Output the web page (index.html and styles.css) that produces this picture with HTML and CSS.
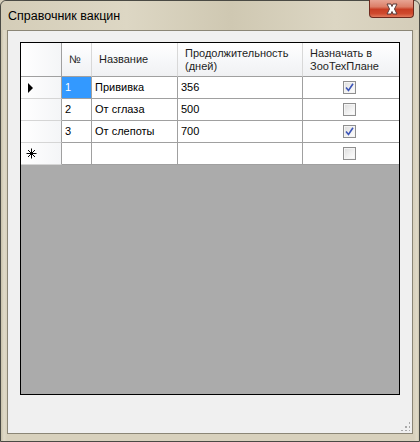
FILE: index.html
```html
<!DOCTYPE html>
<html>
<head>
<meta charset="utf-8">
<link rel="stylesheet" href="styles.css">
</head>
<body>
<div class="window">
  <div class="titlebar">
    <span class="title">Справочник вакцин</span>
    <div class="close">
      <svg width="20" height="12" viewBox="0 0 20 12"><path d="M5 1 L9 1 L10 3.5 L11 1 L15 1 L12.5 6 L15 11 L11 11 L10 8.5 L9 11 L5 11 L7.5 6 Z" fill="#fff" stroke="#5a3a38" stroke-width="1" stroke-linejoin="round"/></svg>
    </div>
  </div>
  <div class="client">
    <div class="grid">
      <div class="rows">
        <div class="c rh hdr"></div>
        <div class="c hdr">№</div>
        <div class="c hdr">Название</div>
        <div class="c hdr">Продолжительность<br>(дней)</div>
        <div class="c hdr">Назначать в<br>ЗооТехПлане</div>

        <div class="c rh"><span class="arrow"></span></div>
        <div class="c sel">1</div>
        <div class="c">Прививка</div>
        <div class="c">356</div>
        <div class="c chk"><span class="box on"><svg width="9" height="9" viewBox="0 0 9 9"><path d="M1 4.5 L3.5 7.5 L8 0.8" fill="none" stroke="#3c55b8" stroke-width="1.6"/></svg></span></div>

        <div class="c rh"></div>
        <div class="c">2</div>
        <div class="c">От сглаза</div>
        <div class="c">500</div>
        <div class="c chk"><span class="box"></span></div>

        <div class="c rh"></div>
        <div class="c">3</div>
        <div class="c">От слепоты</div>
        <div class="c">700</div>
        <div class="c chk"><span class="box on"><svg width="9" height="9" viewBox="0 0 9 9"><path d="M1 4.5 L3.5 7.5 L8 0.8" fill="none" stroke="#3c55b8" stroke-width="1.6"/></svg></span></div>

        <div class="c rh star"><svg width="11" height="11" viewBox="0 0 11 11"><path d="M5.5 0.5 V10.5 M0.5 5.5 H10.5 M2 2 L9 9 M9 2 L2 9" stroke="#000" stroke-width="1" fill="none"/></svg></div>
        <div class="c"></div>
        <div class="c"></div>
        <div class="c"></div>
        <div class="c chk"><span class="box"></span></div>
      </div>
    </div>
    <div class="grip"></div>
  </div>
</div>
</body>
</html>
```
FILE: styles.css
```css
html, body {
  margin: 0;
  padding: 0;
  background: #d6cfbb;
}
.window {
  width: 420px;
  height: 442px;
  box-sizing: border-box;
  display: flex;
  flex-direction: column;
  background: linear-gradient(90deg, #c9c2ab 0px, #e0dac8 3px, #d8d1bd 6px, #d8d1bd 413px, #e0dac8 416px, #c4bda6 419px);
  border: 1px solid #4a4a44;
  border-radius: 6px 6px 0 0;
}
.titlebar {
  height: 29px;
  display: flex;
  align-items: flex-start;
  background: linear-gradient(90deg, #d4cdb8, #ddd7c4 30%, #cfc8b2 55%, #dcd6c3 80%, #d4cdb9);
  border-radius: 6px 6px 0 0;
}
.title {
  font-family: "Liberation Sans", Arial, sans-serif;
  font-size: 12.5px;
  color: #000;
  margin: 8px 0 0 7px;
}
.close {
  margin-left: auto;
  margin-right: 5px;
  margin-top: -1px;
  width: 45px;
  height: 18px;
  box-sizing: border-box;
  border: 1px solid #6e2a1e;
  border-top: none;
  border-radius: 0 0 4px 4px;
  background: linear-gradient(180deg, #e7a493 0%, #dc7f68 40%, #c83e24 55%, #cf4a2e 80%, #e27a5c 100%);
  display: flex;
  align-items: center;
  justify-content: center;
}
.client {
  flex: 1;
  margin: 0 6px 7px 6px;
  background: #f0f0f0;
  border: 1px solid #8b8676;
  padding: 11px 12px 38px 12px;
  display: flex;
  position: relative;
}
.grid {
  flex: 1;
  border: 1px solid #000;
  background: #ababab;
  font-family: "Liberation Sans", Arial, sans-serif;
  font-size: 11px;
  color: #000;
}
.rows {
  display: grid;
  grid-template-columns: 41px 30px 86px 125px 1fr;
  grid-template-rows: 34px 22px 22px 22px 22px;
  background: #fff;
}
.c {
  box-sizing: border-box;
  border-right: 1px solid #a0a0a0;
  border-bottom: 1px solid #a0a0a0;
  padding: 0 0 0 3px;
  display: flex;
  align-items: center;
  line-height: 13px;
  white-space: nowrap;
}
.c:nth-child(5n) {
  border-right: none;
}
.hdr {
  padding-left: 7px;
  background: linear-gradient(180deg, #ffffff 0%, #f7f8fa 50%, #f0f1f3 100%);
  border-right-color: #d8d8d8;
  border-bottom-color: #a0a0a0;
  color: #1e1e1e;
}
.rh {
  background: linear-gradient(90deg, #ffffff, #f4f5f7);
  border-right-color: #a0a0a0;
  border-bottom-color: #d5d5d5;
  padding-left: 0;
}
.rh.hdr {
  border-right-color: #a0a0a0;
  border-bottom-color: #a0a0a0;
}
.arrow {
  width: 0;
  height: 0;
  margin-left: 7px;
  border-top: 5px solid transparent;
  border-bottom: 5px solid transparent;
  border-left: 5px solid #000;
}
.star {
  padding-left: 5px;
}
.star svg {
  display: block;
}
.sel {
  background: #3399ff;
  color: #fff;
  border-right-color: #a0a0a0;
}
.c.hdr:nth-child(2), .c.hdr:nth-child(3), .c.hdr:nth-child(4) {
  padding-left: 7px;
}
.chk {
  justify-content: center;
  padding: 0 3px 0 0;
}
.box {
  width: 13px;
  height: 13px;
  box-sizing: border-box;
  border: 1px solid #8f8f8f;
  background: linear-gradient(135deg, #dcdcdc 0%, #f3f3f3 60%, #ffffff 100%);
  box-shadow: inset 0 0 0 1px #f4f4f4;
  display: flex;
  align-items: center;
  justify-content: center;
}
.grip {
  position: absolute;
  right: 2px;
  bottom: 2px;
  width: 10px;
  height: 10px;
  background-image: radial-gradient(circle, #a9a9a9 0.8px, transparent 1.2px);
  background-size: 4px 4px;
  clip-path: polygon(100% 0, 100% 100%, 0 100%);
}
```
